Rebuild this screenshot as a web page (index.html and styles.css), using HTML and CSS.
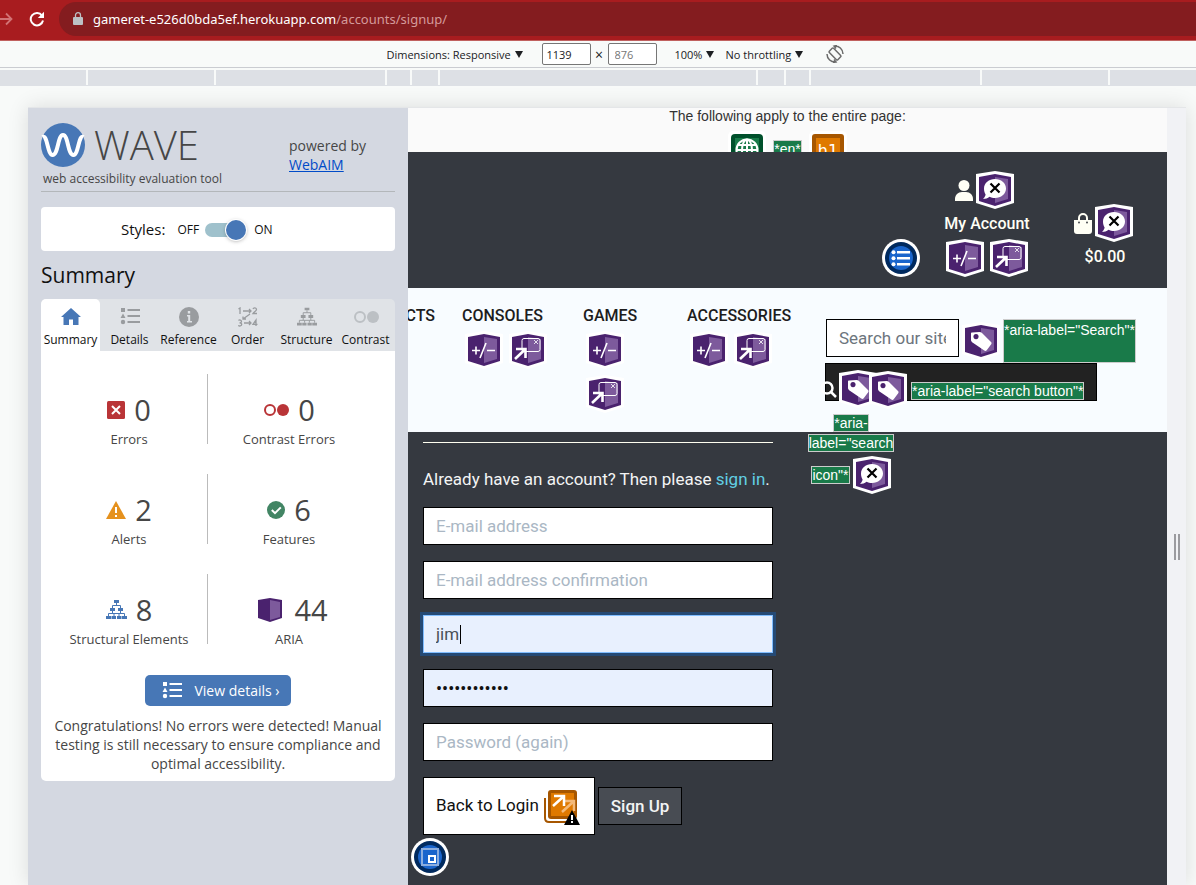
FILE: index.html
```html
<!DOCTYPE html>
<html lang="en">
<head>
<meta charset="utf-8">
<meta name="viewport" content="width=device-width, initial-scale=1">
<title>Sign up</title>
<link rel="stylesheet" href="styles.css">
</head>
<body>
<svg class="defs" aria-hidden="true">
  <symbol id="cube" viewBox="0 0 38 38">
    <path d="M19 0 38 3V32L19 38 0 32V3Z" fill="#fff"/>
    <path d="M19 3 35 6V30L19 35 3 30V6Z" fill="#4a226e"/>
    <path d="M19 6 32 8V28L19 32Z" fill="#7d5a9c"/>
  </symbol>
  <symbol id="hidden-item" viewBox="0 0 38 38">
    <use href="#cube"/>
    <path d="M19 8c6 0 11 4 11 9.500S25 27 19 27c-2 0-4-.4-5.500-1.200-1.800 1.500-4 2.200-6.500 2.200 1.500-1.300 2.300-2.800 2.600-4.400C8.600 21.800 8 19.800 8 17.500 8 12 13 8 19 8Z" fill="#fff"/>
    <path d="m14.500 12.500 9 9m0-9-9 9" stroke="#000" stroke-width="2.200"/>
  </symbol>
  <symbol id="expand" viewBox="0 0 38 38">
    <use href="#cube"/>
    <path d="M7 19.500h8m-4-4v8M15 27l6-15M22 19.500h8" stroke="#fff" stroke-width="1.600" fill="none"/>
  </symbol>
  <symbol id="popup" viewBox="0 0 38 38">
    <use href="#cube"/>
    <rect x="13" y="7.500" width="18" height="13" rx="2" fill="none" stroke="#fff"/>
    <path d="m25 9 4 4m0-4-4 4" stroke="#fff" stroke-width=".8"/>
    <path d="M6 28 16 18.500M7 18h9.500v9" fill="none" stroke="#fff" stroke-width="2.600"/>
  </symbol>
  <symbol id="tag" viewBox="0 0 38 38">
    <use href="#cube"/>
    <path fill-rule="evenodd" d="M10 10.500 17.500 10c1 0 1.800.2 2.500.9l9 9c.7.7.7 1.600.2 2.300l-4.500 6c-.6.8-1.600.9-2.400.3L10.500 20.500C9.700 19.700 9 19 9 18v-6.500c0-.6.400-1 1-1Zm4 1.500a2.600 2.600 0 1 0 .01 0Z" fill="#fff"/>
  </symbol>
  <symbol id="list" viewBox="0 0 20 18">
    <path d="M1 1h4v4H1zM3 6.500 5.500 11h-5zM7.500 2H20v2H7.500zM7.500 8H20v2H7.500zM7.500 14H20v2H7.500z" fill="currentColor"/>
    <circle cx="3" cy="15" r="2.200" fill="currentColor"/>
  </symbol>
  <symbol id="tree" viewBox="0 0 21 20">
    <path d="M8 0h5v3H8zM4 8h5v3H4zM12 8h5v3h-5zM0 16h5v3H0zM5.500 16h4.500v3H5.500zM11 16h4.500v3H11zM16 16h5v3h-5z" fill="currentColor"/>
    <path d="M10.500 3v2.500M6.500 8V5.500h8V8M6.500 11v2.500M14.500 11v2.500M2.500 16v-2.500h16V16M8 16v-2.500M13 16v-2.500" stroke="currentColor" fill="none"/>
  </symbol>
  <symbol id="rings" viewBox="0 0 26 14">
    <circle cx="7" cy="7" r="5" fill="none" stroke="currentColor" stroke-width="2"/>
    <circle cx="20" cy="7" r="6" fill="currentColor"/>
  </symbol>
  <symbol id="caret" viewBox="0 0 8 7"><path d="M0 0h8L4 7Z" fill="#1d1f22"/></symbol>
</svg>

<header class="browser-bar">
  <svg class="nav-arrow" viewBox="0 0 14 14"><path d="M0 7h11M6 1.500 11.500 7 6 12.500" fill="none" stroke="#d27375" stroke-width="1.800"/></svg>
  <svg class="reload" viewBox="0 0 16 16"><path d="M13 4.600A6.200 6.200 0 1 0 14 9.500" fill="none" stroke="#fff" stroke-width="2"/><path d="M15 .8V7H8.800Z" fill="#fff"/></svg>
  <div class="address">
    <svg class="lock" viewBox="0 0 10 13"><path d="M1 5h8a1 1 0 0 1 1 1v6a1 1 0 0 1-1 1H1a1 1 0 0 1-1-1V6a1 1 0 0 1 1-1Z" fill="#bcc0c4"/><path d="M2.500 5V3.200a2.500 2.500 0 0 1 5 0V5" fill="none" stroke="#bcc0c4" stroke-width="1.300"/></svg>
    <span>gameret-e526d0bda5ef.herokuapp.com<span class="path">/accounts/signup/</span></span>
  </div>
</header>

<div class="device-bar">
  <label class="pick pick-device"><select aria-label="Dimensions"><option>Dimensions: Responsive</option></select><svg class="caret"><use href="#caret"/></svg></label>
  <input class="size" aria-label="Width" value="1139">
  <span class="times">×</span>
  <input class="size size-h" aria-label="Height" placeholder="876">
  <label class="pick pick-zoom"><select aria-label="Zoom"><option>100%</option></select><svg class="caret"><use href="#caret"/></svg></label>
  <label class="pick"><select aria-label="Throttling"><option>No throttling</option></select><svg class="caret"><use href="#caret"/></svg></label>
  <svg class="rotate" viewBox="0 0 18 18" fill="none" stroke="#6b6b6b" stroke-width="1.500"><rect x="6" y="3" width="6" height="12" rx="1" transform="rotate(-45 9 9)"/><path d="M8 1c5-.5 9 3 9 8M11 .5 8 1l2 2.500M10 17c-5 .5-9-3-9-8M7 17.500l3-.5-2-2.500"/></svg>
</div>

<div class="ruler"><i></i><i class="w126"></i><i class="w170"></i><i class="w24"></i><i class="w26"></i><i class="w316"></i><i class="w26"></i><i class="w24"></i><i class="w170"></i><i class="w126"></i><i></i></div>

<div class="viewport">
  <aside class="wave">
    <div class="brand">
      <div class="brand-main">
        <div class="brand-row">
          <svg class="logo" viewBox="0 0 44 44"><circle cx="22" cy="22" r="22" fill="#4777b6"/><path d="M1.500 14c5-3 5 18 10 18 6 0 5-20 10.500-20s4.500 20 10.500 20c5 0 5-21 10-18" fill="none" stroke="#fff" stroke-width="4"/></svg>
          <span class="wordmark">WAVE</span>
        </div>
        <div class="tagline">web accessibility evaluation tool</div>
      </div>
      <p class="powered">powered by<br><a href="#">WebAIM</a></p>
    </div>
    <label class="styles-box"><span class="styles-title">Styles:</span><span>OFF</span><input type="checkbox" class="switch" role="switch" aria-label="Styles" checked><span>ON</span></label>
    <h2>Summary</h2>
    <nav class="tabs">
      <button class="tab active"><svg viewBox="0 0 20 20"><path d="M10 1 0 10h2.500v8H8v-5.500h4V18h5.500v-8H20Z" fill="#4777b6"/></svg>Summary</button>
      <button class="tab"><svg viewBox="0 0 20 20"><use href="#list" width="20" height="18"/></svg>Details</button>
      <button class="tab"><svg viewBox="0 0 20 20"><circle cx="10" cy="10" r="10" fill="currentColor"/><path d="M8.800 4h2.400v2.400H8.800zM8 8h3.200v6H13v1.500H8V14h1.200V9.500H8Z" fill="#e0e3e7"/></svg>Reference</button>
      <button class="tab"><svg viewBox="0 0 20 20" fill="none" stroke="currentColor" stroke-width="1.300"><path d="m.5 2 1.500-1v6M15 2c.5-1.500 3.500-1.500 3.500.5 0 1.500-2.500 2.500-3.500 4h4M.5 13.500c1-1 3-.5 3 1 0 1-1 1.400-2 1.400 1 0 2.200.5 2.200 1.600 0 1.500-2.500 2-3.500.8M18 19v-6l-3 4.300h4.500M5 4h8M11 2l2 2-2 2M6 16h7M11 14l2 2-2 2M12 7l-7 5M5 9.500V12h3"/></svg>Order</button>
      <button class="tab"><svg viewBox="0 0 21 20"><use href="#tree"/></svg>Structure</button>
      <button class="tab"><svg class="pale" viewBox="0 0 26 14"><use href="#rings"/></svg>Contrast</button>
    </nav>
    <section class="card">
      <div class="stats">
        <div class="stat"><div class="count"><svg class="i18" viewBox="0 0 18 18"><rect width="18" height="18" rx="1.500" fill="#b93437"/><path d="m5 5 8 8m0-8-8 8" stroke="#fff" stroke-width="2"/></svg>0</div>Errors</div>
        <div class="stat"><div class="count"><svg class="i26 red" viewBox="0 0 26 14"><use href="#rings"/></svg>0</div>Contrast Errors</div>
        <div class="stat"><div class="count"><svg class="i20" viewBox="0 0 20 18"><path d="M10 0 20 18H0Z" fill="#e5911d"/><path d="M9 6h2v6H9zM9 14h2v2H9z" fill="#fff"/></svg>2</div>Alerts</div>
        <div class="stat"><div class="count"><svg class="i18" viewBox="0 0 18 18"><circle cx="9" cy="9" r="9" fill="#428564"/><path d="m4.800 9 3.200 3.200 5.800-5.800" fill="none" stroke="#fff" stroke-width="2"/></svg>6</div>Features</div>
        <div class="stat"><div class="count"><svg class="i21" viewBox="0 0 21 20"><use href="#tree"/></svg>8</div>Structural Elements</div>
        <div class="stat"><div class="count aria"><svg class="i24" viewBox="0 0 24 24"><path d="M12 0 24 2V20L12 24 0 20V2Z" fill="#4a226e"/><path d="m12 2 10 2V19L12 22Z" fill="#7d5a9c"/></svg>44</div>ARIA</div>
      </div>
      <button class="details"><svg viewBox="0 0 20 18"><use href="#list"/></svg>View details ›</button>
      <p class="congrats">Congratulations! No errors were detected! Manual testing is still necessary to ensure compliance and optimal accessibility.</p>
    </section>
  </aside>

  <main class="site">
    <div class="notes">
      <p>The following apply to the entire page:</p>
      <div class="note-icons">
        <svg viewBox="0 0 38 38"><rect width="38" height="38" rx="5" fill="#fff"/><rect x="3" y="3" width="32" height="32" rx="4" fill="#00502b"/><rect x="7" y="7" width="24" height="24" fill="#197a49"/><g fill="none" stroke="#fff" stroke-width="2"><circle cx="19" cy="19" r="10.500"/><ellipse cx="19" cy="19" rx="5" ry="10.500"/><path d="M19 8v22M8.500 19h21M10 14h18"/></g></svg>
        <span class="flag">*en*</span>
        <svg viewBox="0 0 38 38"><rect width="38" height="38" rx="5" fill="#fff"/><rect x="3" y="3" width="32" height="32" rx="3" fill="#a65600"/><rect x="7" y="7" width="24" height="24" fill="#df7900"/><text x="19" y="25" text-anchor="middle" class="h1-text">h1</text></svg>
      </div>
    </div>
    <header class="top">
      <svg class="ic" viewBox="0 0 38 38"><circle cx="19" cy="19" r="19" fill="#fff"/><circle cx="19" cy="19" r="16" fill="#002a5f"/><circle cx="19" cy="19" r="12" fill="#1a65cc"/><path d="M15 12h13v2.500H15zM15 18h13v2.500H15zM15 24h13v2.500H15z" fill="#fff"/><g fill="#fff"><circle cx="11.500" cy="13.200" r="2"/><circle cx="11.500" cy="19.200" r="2"/><circle cx="11.500" cy="25.200" r="2"/></g></svg>
      <div class="account">
        <div class="pair"><svg class="user" viewBox="0 0 18 21"><circle cx="9" cy="5.500" r="5.500" fill="#fffff5"/><path d="M0 21v-2c0-4 3-7 7-7h4c4 0 7 3 7 7v2Z" fill="#fffff5"/></svg><svg class="ic"><use href="#hidden-item"/></svg></div>
        <span>My Account</span>
        <div class="pair spaced"><svg class="ic"><use href="#expand"/></svg><svg class="ic"><use href="#popup"/></svg></div>
      </div>
      <div class="bag">
        <div class="pair"><svg class="user" viewBox="0 0 18 21"><path d="M0 7h18v11a3 3 0 0 1-3 3H3a3 3 0 0 1-3-3Z" fill="#fffff5"/><path d="M5 9V5a4 4 0 0 1 8 0v4" fill="none" stroke="#fffff5" stroke-width="2"/><circle cx="5" cy="9.500" r=".9" fill="#353940"/><circle cx="13" cy="9.500" r=".9" fill="#353940"/></svg><svg class="ic"><use href="#hidden-item"/></svg></div>
        <span>$0.00</span>
      </div>
    </header>
    <div class="menu">
      <a href="#" class="item cut">CTS</a>
      <div class="item"><a href="#">CONSOLES</a><div class="icons"><svg class="ic"><use href="#expand"/></svg><svg class="ic"><use href="#popup"/></svg></div></div>
      <div class="item narrow"><a href="#">GAMES</a><div class="icons"><svg class="ic"><use href="#expand"/></svg><svg class="ic"><use href="#popup"/></svg></div></div>
      <div class="item"><a href="#">ACCESSORIES</a><div class="icons"><svg class="ic"><use href="#expand"/></svg><svg class="ic"><use href="#popup"/></svg></div></div>
      <div class="search">
        <div class="search-row"><input class="field" aria-label="Search" placeholder="Search our site"><svg class="ic"><use href="#tag"/></svg><span class="flag tall">*aria-label="Search"*</span></div>
        <button class="search-btn" aria-label="search button"><svg class="glass" viewBox="0 0 17 17"><circle cx="7" cy="7" r="5.500" fill="none" stroke="#fff" stroke-width="2.500"/><path d="m11 11 5 5" stroke="#fff" stroke-width="2.500"/></svg><svg class="ic"><use href="#tag"/></svg><svg class="ic overlap"><use href="#tag"/></svg><span class="flag">*aria-label="search button"*</span></button>
        <div class="spill"><span class="flag">*aria-</span><span class="flag">label="search</span><div class="spill-row"><span class="flag">icon"*</span><svg class="ic"><use href="#hidden-item"/></svg></div></div>
      </div>
    </div>
    <form class="signup">
      <hr>
      <p>Already have an account? Then please <a href="#">sign in</a>.</p>
      <input class="field" type="email" aria-label="E-mail address" placeholder="E-mail address">
      <input class="field" type="email" aria-label="E-mail address confirmation" placeholder="E-mail address confirmation">
      <div class="active-field"><input class="field filled focused" aria-label="Username" value="jim"><span class="cursor"></span></div>
      <input class="field filled secret" type="password" aria-label="Password" value="abcdefghijkl">
      <input class="field" type="password" aria-label="Password (again)" placeholder="Password (again)">
      <div class="actions">
        <a class="back" href="#">Back to Login<svg viewBox="0 0 36 36"><path d="M1 9v20q0 4 4 4h20" fill="none" stroke="#a65600" stroke-width="2"/><rect x="4" y="1" width="29" height="29" rx="3" fill="#a65600"/><rect x="7" y="4" width="23" height="23" fill="#df7900"/><path d="m18 23 11-10M20 12h10v10" fill="none" stroke="#f4b978" stroke-width="2.500"/><path d="M9 17 19 8M10 7h10v10" fill="none" stroke="#fff" stroke-width="2.500"/><path d="m28 21 8 15H20Z" fill="#000"/><path d="M27 26h2v5h-2zM27 32h2v2h-2z" fill="#fff"/></svg></a>
        <button class="submit">Sign Up</button>
      </div>
    </form>
    <svg class="ic footer-mark" viewBox="0 0 38 38"><circle cx="19" cy="19" r="19" fill="#fff"/><circle cx="19" cy="19" r="16" fill="#002a5f"/><circle cx="19" cy="19" r="12" fill="#1a65cc"/><path d="M11 11h16v16H11z" fill="none" stroke="#8badde" stroke-width="2"/><path d="M18 18h6v6h-6z" fill="#1a65cc" stroke="#fff" stroke-width="2"/></svg>
  </main>
  <div class="grip"><i></i><i></i></div>
</div>
</body>
</html>
```
FILE: styles.css
```css
* { box-sizing: border-box; }
body { margin: 0; min-height: 100vh; display: flex; flex-direction: column; background: #f8faf9; font: 14px "Open Sans", sans-serif; color: #111; overflow: hidden; }
p, h2 { margin: 0; font-weight: 400; }
svg { display: block; flex: none; }
button, input, select { font: inherit; color: inherit; margin: 0; }
.defs { position: absolute; width: 0; height: 0; }

/* Browser chrome */
.browser-bar { display: flex; align-items: center; height: 41px; padding-bottom: 3px; background: #a81c1f; border-bottom: 1px solid #c0605f; }
.nav-arrow { width: 14px; height: 14px; }
.reload { width: 16px; height: 16px; margin: 0 14px 0 15px; }
.address { flex: 1; display: flex; align-items: center; gap: 10px; height: 34px; padding-left: 14px; background: #841c1f; border-radius: 17px 0 0 17px; color: #fff; font: 13px "Noto Sans", sans-serif; }
.lock { width: 10px; height: 13px; }
.path { color: #d49a9b; }

.device-bar { display: flex; justify-content: center; align-items: center; height: 27px; padding-left: 34px; border-bottom: 1px solid #caccd1; font-size: 11px; color: #202124; }
.pick { display: flex; align-items: center; gap: 3px; margin-right: 12px; }
.pick-device { margin-right: 19px; }
.pick select { appearance: none; border: 0; padding: 0; background: none; }
.caret { width: 8px; height: 7px; }
.size { width: 49px; height: 22px; padding: 0 4px; border: 1px solid #767676; border-radius: 2px; background: #fff; }
.size-h { margin-right: 18px; padding-left: 6px; }
.size::placeholder { color: #757575; }
.times { width: 17px; text-align: center; font-size: 14px; }
.rotate { width: 18px; height: 18px; margin-left: 11px; }

.ruler { display: flex; gap: 2px; height: 16px; margin: 2px 0 21px; background: #f8faf9; border-bottom: 1px solid #dde0e5; }
.ruler i { flex: 1; background: #dde0e5; }
.ruler [class] { flex: none; }
.w24 { width: 23px; }
.w26 { width: 26px; }
.w126 { width: 126px; }
.w170 { width: 169px; }
.w316 { width: 316px; }

.viewport { flex: 1; display: flex; margin: 0 10px 0 28px; border-top: 1px solid #e4e6e8; box-shadow: 0 0 20px #0000001f; }
.grip { width: 19px; display: flex; justify-content: center; align-items: center; gap: 2px; padding-top: 100px; background: #f1f2f5; }
.grip i { width: 2px; height: 26px; background: #9b9b9f; }

/* Evaluation panel */
.wave { width: 380px; flex: none; padding: 15px 13px; background: #d4d8e1; color: #464646; }
.brand { display: flex; border-bottom: 1px solid #b3b7ba; height: 69px; }
.brand-main { width: 248px; }
.brand-row { display: flex; gap: 9px; height: 44px; align-items: center; }
.logo { width: 44px; height: 44px; }
.wordmark { font-size: 40px; font-weight: 300; line-height: 44px; }
.tagline { padding: 3px 2px 0; font-size: 12px; line-height: 18px; }
.powered { padding-top: 13px; line-height: 19px; }
.styles-box { display: flex; align-items: center; height: 44px; margin: 15px 0 10px; padding-left: 80px; background: #fff; border-radius: 4px; color: #111; font-size: 12px; }
.styles-title { font-size: 15px; margin-right: 12px; }
.switch { appearance: none; width: 39px; height: 14px; margin: 2px 10px 0 6px; border-radius: 7px; background: #9fc1cc; position: relative; }
.switch::after { content: ""; position: absolute; right: -2px; top: -3px; width: 20px; height: 20px; border-radius: 50%; background: #4777b6; box-shadow: 0 0 0 1px #fff, 0 1px 4px #0006; }
h2 { font-size: 21px; line-height: 28px; margin-bottom: 10px; color: #111; }
.tabs { display: grid; grid-template-columns: repeat(6, 1fr); height: 52px; background: #e0e3e7; border-radius: 5px 5px 0 0; }
.tab { display: flex; flex-direction: column; align-items: center; gap: 5px; padding: 8px 0 0; border: 0; background: none; font-size: 12px; line-height: 16px; color: #111; white-space: nowrap; }
.tab svg { width: 20px; height: 20px; color: #999c9f; }
.tab .pale { width: 26px; color: #bcc0c4; }
.tab.active { background: #fff; border-radius: 5px 5px 0 0; }
.card { background: #fff; border-radius: 0 0 5px 5px; padding: 23px 5px 8px; text-align: center; }
.stats { display: grid; grid-template-columns: 162px 162px; row-gap: 30px; font-size: 13px; }
.stat { height: 70px; line-height: 18px; }
.stat:nth-child(odd) { border-right: 1px solid #bbb; padding-left: 5px; }
.count { display: flex; justify-content: center; align-items: center; gap: 9px; height: 56px; padding-top: 16px; font-size: 29px; line-height: 36px; }
.aria { gap: 12px; padding-left: 8px; }
.i18 { width: 18px; height: 18px; }
.i20 { width: 20px; height: 18px; }
.i21 { width: 21px; height: 20px; color: #4777b6; }
.i24 { width: 24px; height: 24px; }
.i26 { width: 26px; height: 14px; }
.red { color: #b93437; }
.details { display: flex; align-items: center; gap: 12px; height: 31px; margin: 31px auto 10px; padding: 0 11px 1px 17px; border: 0; border-radius: 5px; background: #4777b6; color: #fff; font-size: 14px; }
.details svg { width: 20px; height: 18px; }
.congrats { line-height: 19px; }

/* Shop page */
.site { flex: 1; min-width: 0; background: #353940; font-family: Roboto, sans-serif; font-size: 16px; }
.ic { width: 38px; height: 38px; }
.flag { font: 14px/16px "Liberation Sans", Arial, sans-serif; color: #fff; background: #197a49; border: 1px solid #ccc; white-space: nowrap; }
.notes { height: 44px; overflow: hidden; background: #fafafa; font: 14px/16px "Liberation Sans", Arial, sans-serif; text-align: center; color: #333; }
.note-icons { display: flex; justify-content: center; gap: 7px; padding-top: 7px; }
.note-icons svg { width: 38px; height: 38px; }
.note-icons .flag { margin-top: 9px; }
.h1-text { font: 16px "DejaVu Sans", sans-serif; fill: #fff; }
.top { display: flex; justify-content: flex-end; align-items: flex-end; height: 136px; padding: 0 34px 11px 0; color: #fffff5; font-weight: 500; line-height: 30px; }
.account { width: 88px; margin: 0 43px 0 23px; text-align: center; }
.pair { display: flex; align-items: center; justify-content: center; gap: 3px; padding-right: 6px; }
.account .spaced { gap: 6px; padding: 0; }
.bag { padding-bottom: 5px; text-align: center; }
.bag .pair { padding: 0; }
.bag span { padding-left: 3px; }
.user { width: 18px; height: 21px; }
.menu { display: grid; grid-template-columns: 54px 121px 104px 121px 1fr; height: 144px; padding-top: 16px; background: #f8fcff; }
.item { font-weight: 500; line-height: 24px; color: #1d1d1d; }
.cut { width: 27px; height: 24px; display: flex; justify-content: flex-end; overflow: hidden; }
a { color: inherit; text-decoration: none; }
.powered a { color: #004bc8; text-decoration: underline; }
.icons { display: flex; flex-wrap: wrap; gap: 6px; padding: 3px 0 0 3px; }
.narrow { width: 54px; }
.search { position: relative; padding: 15px 0 0 18px; }
.search-row { display: flex; align-items: flex-start; gap: 3px; }
.search-row .ic { margin-top: 3px; }
.field { display: block; width: 100%; height: 38px; padding: 0 12px; border: 1px solid #000; border-radius: 0; background: #fff; color: #495057; outline: 0; font-size: 17px; }
.field::placeholder { color: #aab7c4; opacity: 1; }
.search-row .field { width: 133px; }
.search-row .field::placeholder { color: #6c757d; }
.search .tall { height: 44px; padding-top: 2px; }
.search-btn { display: flex; align-items: center; width: 272px; height: 38px; margin: 0 0 0 -1px; padding: 14px 0 0; border: 1px solid #000; background: #222; overflow: visible; }
.search-btn .flag { margin-top: 4px; }
.glass { width: 17px; height: 17px; margin: 0 2px 0 -6px; }
.search-btn .overlap { margin: 1px 4px 0 -8px; }
.spill { position: absolute; left: 0; top: 110px; width: 86px; display: flex; flex-direction: column; align-items: center; gap: 2px; }
.spill-row { display: flex; align-items: center; gap: 3px; margin-top: 2px; }
.signup { width: 380px; padding: 10px 15px 0; display: flex; flex-direction: column; gap: 16px; font-size: 17px; }
hr { width: 100%; height: 1px; margin: 0 0 8px; border: 0; background: #fffff0; }
.signup p { color: #f3f4f4; line-height: 24px; white-space: nowrap; }
.signup p a { color: #62d0e4; }
.filled { background: #e8f0fe; }
.secret { color: #111; font-size: 18px; }
.active-field { position: relative; }
.focused { border-color: #80bdff; box-shadow: 0 0 0 3px #254a75; }
.cursor { position: absolute; left: 37px; top: 10px; width: 1px; height: 19px; background: #000; }
.actions { display: flex; align-items: center; gap: 3px; }
.back { display: flex; align-items: center; gap: 5px; height: 58px; padding: 0 14px 2px 12px; border: 1px solid #000; background: #fff; color: #111; white-space: nowrap; }
.back svg { width: 36px; height: 36px; margin-top: 4px; }
.submit { height: 38px; padding: 0 12px; border: 1px solid #000; background: #484c53; color: #f3f4f4; font-weight: 500; }
.footer-mark { margin: 3px; }
```
